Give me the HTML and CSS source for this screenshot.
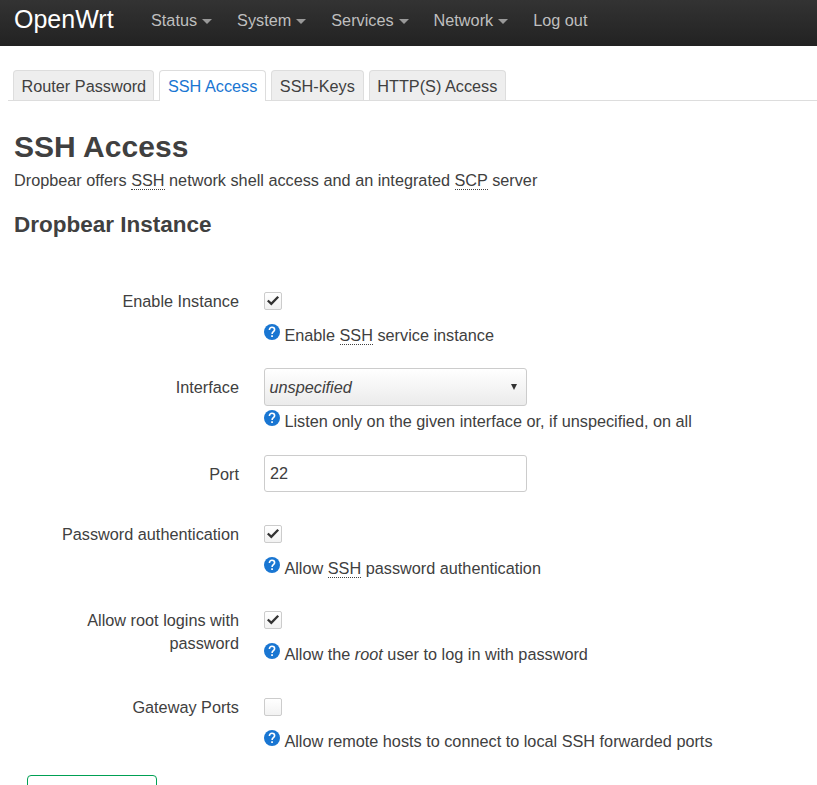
FILE: index.html
```html
<!DOCTYPE html>
<html lang="en">
<head>
<meta charset="utf-8">
<title>OpenWrt - SSH Access</title>
<link rel="stylesheet" href="styles.css">
</head>
<body>
<svg class="defs" width="0" height="0" aria-hidden="true">
  <symbol id="help" viewBox="0 0 16 16"><circle cx="8" cy="8" r="8" fill="#1976d2"/><path d="M5.4 6.1C5.4 4.4 6.5 3.3 8 3.3s2.6 1 2.6 2.5c0 1.900-2.500 2-2.500 4.100" fill="none" stroke="#fff" stroke-width="1.600"/><path d="M7.200 11.200h1.700v1.700H7.200z" fill="#fff"/></symbol>
  <symbol id="check" viewBox="0 0 18 18"><path d="M3.800 8.500l3.500 3.400L14.200 4.700" fill="none" stroke="#333" stroke-width="2.300"/></symbol>
</svg>
<header class="topbar">
  <a class="brand">OpenWrt</a>
  <nav class="nav">
    <a class="menu">Status</a><a class="menu">System</a><a class="menu">Services</a><a class="menu">Network</a><a>Log out</a>
  </nav>
</header>
<ul class="tabs">
  <li>Router Password</li><li class="active">SSH Access</li><li>SSH-Keys</li><li>HTTP(S) Access</li>
</ul>
<main>
  <h2>SSH Access</h2>
  <p class="intro">Dropbear offers <abbr>SSH</abbr> network shell access and an integrated <abbr>SCP</abbr> server</p>
  <h3>Dropbear Instance</h3>
  <form class="form">
    <div class="row">
      <label>Enable Instance</label>
      <div class="field"><span class="checkbox"><svg><use href="#check"/></svg></span>
        <div class="hint"><svg><use href="#help"/></svg><span>Enable <abbr>SSH</abbr> service instance</span></div></div>
    </div>
    <div class="row">
      <label>Interface</label>
      <div class="field"><div class="dropdown"><em>unspecified</em><i class="arrow"></i></div>
        <div class="hint"><svg><use href="#help"/></svg><span>Listen only on the given interface or, if unspecified, on all</span></div></div>
    </div>
    <div class="row short">
      <label>Port</label>
      <div class="field"><div class="textbox">22</div></div>
    </div>
    <div class="row">
      <label>Password authentication</label>
      <div class="field"><span class="checkbox"><svg><use href="#check"/></svg></span>
        <div class="hint"><svg><use href="#help"/></svg><span>Allow <abbr>SSH</abbr> password authentication</span></div></div>
    </div>
    <div class="row">
      <label>Allow root logins with password</label>
      <div class="field"><span class="checkbox"><svg><use href="#check"/></svg></span>
        <div class="hint"><svg><use href="#help"/></svg><span>Allow the <em>root</em> user to log in with password</span></div></div>
    </div>
    <div class="row">
      <label>Gateway Ports</label>
      <div class="field"><span class="checkbox"></span>
        <div class="hint"><svg><use href="#help"/></svg><span>Allow remote hosts to connect to local SSH forwarded ports</span></div></div>
    </div>
    <div class="add"></div>
  </form>
</main>
</body>
</html>
```
FILE: styles.css
```css
* { box-sizing: border-box; }
html, body { height: 785px; overflow: hidden; }
body { margin: 0; background: #fff; color: #404040; font: 16.25px/23px "Liberation Sans", Arial, sans-serif; }
.defs { position: absolute; }
.topbar { display: flex; height: 46px; padding-left: 14px; background: linear-gradient(#333, #222); }
.brand { width: 137px; font-size: 25px; line-height: 39px; color: #fff; }
.nav { display: flex; gap: 25px; height: 40px; line-height: 40px; color: #bfbfbf; }
.menu { display: flex; align-items: center; }
.menu::after { content: ""; margin: 3px 0 0 5px; border: solid transparent; border-width: 5px 5px 0; border-top-color: #999; }
.tabs { display: flex; gap: 5px; height: 31px; margin: 24px 0 0 8px; padding: 0 0 0 5px; list-style: none; border-bottom: 1px solid #ddd; }
.tabs li { height: 30px; padding: 0 7.750px; line-height: 31px; white-space: nowrap; background: #eee; border: 1px solid #ddd; border-bottom: 0; border-radius: 4px 4px 0 0; }
.tabs li:first-child { padding: 0 7px 0 7.500px; }
.tabs .active { height: 31px; background: #fff; color: #1976d2; }
main { padding: 0 14px; }
h2 { margin: 26px 0 0; font-size: 30px; line-height: 40px; letter-spacing: .05px; }
.intro { margin: 2px 0 0; }
h3 { margin: 15px 0 0; font-size: 22.500px; line-height: 36px; }
abbr { border-bottom: 1px dotted #404040; }
.form { margin-top: 39px; }
.row { display: grid; grid-template-columns: 225px 1fr; column-gap: 25px; height: 86.400px; }
.short { height: 60px; }
label { padding: 8px 0 0 60px; text-align: right; }
.row:first-child label, .row:nth-child(n+4) label { padding-left: 40px; }
.field { display: flex; flex-direction: column; align-items: flex-start; }
.checkbox { width: 18px; height: 18px; margin: 10px 0 14px; background: linear-gradient(#fff, #f2f2f2); border: 1px solid #ccc; border-radius: 2px; }
.checkbox svg { display: block; width: 18px; height: 18px; margin: -1px; }
.dropdown, .textbox { display: flex; align-items: center; width: 263px; height: 37px; padding: 0 5px; border: 1px solid #ccc; border-radius: 3px; }
.dropdown { justify-content: space-between; height: 38px; margin-bottom: 4px; padding: 0 9px 0 4.500px; background: linear-gradient(#fff, #ebebeb); }
.arrow { border: solid transparent; border-width: 6px 3.500px 0; border-top-color: #333; }
.hint { display: flex; gap: 4.400px; white-space: nowrap; }
.hint svg { width: 16px; height: 16px; }
.add { width: 130px; height: 36px; margin: 1px 0 0 13px; border: 1px solid #00a054; border-radius: 4px; }
```
